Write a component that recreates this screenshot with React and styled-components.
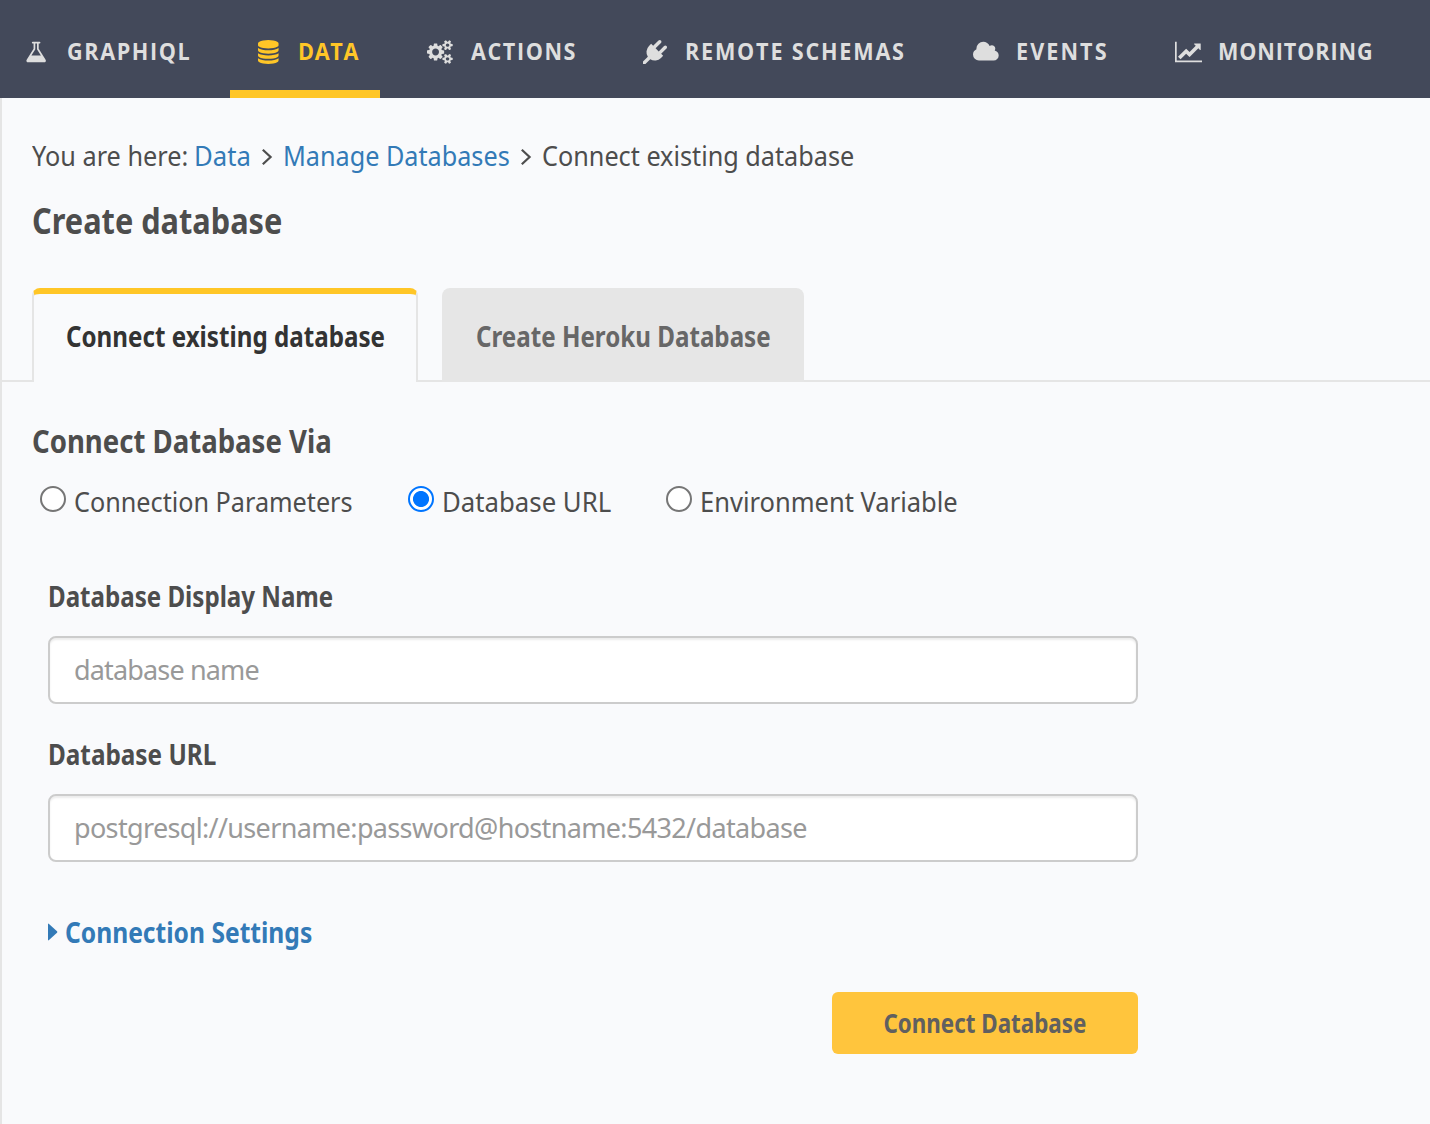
import React from 'react';
import styled, { createGlobalStyle, css } from 'styled-components';

const Global = createGlobalStyle`
  *, *::before, *::after { box-sizing: border-box; }
  body { margin: 0; background: #f9fafc; }
`;

const face = css`
  font-family: "Noto Sans", "Open Sans", sans-serif;
  font-weight: ${(p) => (p.$bold ? 700 : 400)};
  white-space: nowrap;
`;

/* Narrows the glyphs horizontally while keeping their height. */
const Narrow = styled.span`
  display: inline-block;
  transform: scaleX(${(p) => p.$by});
  transform-origin: ${(p) => p.$origin || 'left'} center;
`;

const Page = styled.div`
  min-height: 1124px;
  display: flex;
  flex-direction: column;
  overflow: hidden;
  color: #4d4d4d;
`;

const Nav = styled.nav`
  display: flex;
  height: 98px;
  background: #43495a;
`;

const NavItem = styled.a`
  display: flex;
  flex: none;
  align-items: center;
  width: ${(p) => p.$width}px;
  margin-right: ${(p) => p.$gap}px;
  padding: 12px 0 0 ${(p) => p.$pad}px;
  border-bottom: 8px solid ${(p) => (p.$active ? '#ffc627' : 'transparent')};
  color: ${(p) => (p.$active ? '#ffc627' : '#dedede')};
  text-decoration: none;
`;

const NavIcon = styled.span`
  display: flex;
  flex: none;
  width: ${(p) => p.$width}px;
  padding-top: 1px;
  svg { display: block; height: 24px; fill: currentColor; }
`;

const NavLabel = styled(Narrow)`
  font-family: "Open Sans", "Noto Sans", sans-serif;
  font-weight: 700;
  font-size: 24px;
  line-height: 32px;
  letter-spacing: ${(p) => p.$track}px;
  white-space: nowrap;
`;

const Main = styled.main`
  flex: 1;
  border-left: 2px solid #e5e5e5;
`;

const Breadcrumb = styled.div`
  display: flex;
  height: 40px;
  margin: 37px 0 0 30px;
`;

const Crumb = styled.span`
  ${face}
  flex: none;
  width: ${(p) => p.$width}px;
  font-size: 28px;
  line-height: 40px;
  color: ${(p) => (p.$link ? '#337ab7' : '#4d4d4d')};
`;

const Chevron = styled.svg`
  flex: none;
  width: 12px;
  height: 18px;
  margin: 13px ${(p) => p.$gap}px 0 0;
  fill: none;
  stroke: #4d4d4d;
  stroke-width: 2.2;
`;

const Title = styled.h1`
  ${face}
  margin: 21px 0 0 30px;
  font-size: 36px;
  line-height: 50px;
`;

const Tabs = styled.div`
  display: flex;
  gap: 24px;
  height: 94px;
  margin-top: 42px;
  padding-left: 30px;
  box-shadow: inset 0 -2px #e5e5e5;
`;

const Tab = styled.div`
  ${face}
  width: ${(p) => p.$width}px;
  padding-left: ${(p) => (p.$active ? 31.5 : 33.5)}px;
  font-size: 28px;
  border-radius: 8px 8px 0 0;
  ${(p) =>
    p.$active
      ? css`
          border: 2px solid #e5e5e5;
          border-top: 6px solid #ffc627;
          border-bottom: 0;
          background: #f9fafc;
          color: #333;
          line-height: 84px;
        `
      : css`
          background: #e6e6e6;
          color: #676767;
          line-height: 96px;
        `}
`;

const Section = styled.h2`
  ${face}
  margin: 39px 0 0 30px;
  font-size: 32px;
  line-height: 40px;
`;

const Radios = styled.div`
  display: flex;
  margin: 20px 0 0 38px;
  height: 40px;
`;

const RadioLabel = styled.label`
  ${face}
  display: flex;
  width: ${(p) => p.$width}px;
  font-size: 28px;
  line-height: 40px;
`;

const Radio = styled.input.attrs({ type: 'radio' })`
  appearance: none;
  flex: none;
  width: 26px;
  height: 26px;
  margin: 5px 8px 0 0;
  border: 2px solid #767676;
  border-radius: 50%;
  background: #fff;
  &:checked {
    border-color: #0075ff;
    background: radial-gradient(circle, #0075ff 7.6px, #fff 8.4px);
  }
`;

const Form = styled.form`
  display: flex;
  flex-direction: column;
  width: 1090px;
  margin: 55px 0 0 46px;
`;

const Label = styled.label`
  ${face}
  font-size: 28px;
  line-height: 40px;
`;

const Field = styled.input`
  ${face}
  height: 68px;
  margin: 20px 0 30px;
  padding: 0 24px 1px;
  border: 2px solid #ccc;
  border-radius: 8px;
  background: #fff;
  box-shadow: inset 0 2px 2px rgba(0, 0, 0, 0.075);
  font-size: 27px;
  letter-spacing: ${(p) => p.$track}px;
  &::placeholder { color: #999; opacity: 1; }
`;

const Settings = styled.a`
  ${face}
  display: flex;
  align-items: center;
  gap: 6.5px;
  margin-top: 20px;
  font-size: 28px;
  line-height: 40px;
  color: #337ab7;
  svg { width: 10px; height: 18px; fill: currentColor; }
`;

const Submit = styled.button`
  ${face}
  align-self: flex-end;
  width: 306px;
  height: 62px;
  margin-top: 40px;
  padding: 0;
  border: 0;
  border-radius: 6px;
  background: #ffc53d;
  color: #606060;
  font-size: 26px;
`;

const ICONS = {
  flask: ['0 0 1792 1792', 'M1527 1448q56 89 21.5 152.5t-140.5 63.5h-1152q-106 0-140.5-63.5t21.5-152.5l503-793v-399h-64q-26 0-45-19t-19-45 19-45 45-19h512q26 0 45 19t19 45-19 45-45 19h-64v399zm-779-725l-272 429h712l-272-429-20-31v-436h-128v436z'],
  database: ['128 0 1536 1792', 'M896 768q237 0 443-43t325-127v170q0 69-103 128t-280 93.5-385 34.5-385-34.5-280-93.5-103-128v-170q119 84 325 127t443 43zm0 768q237 0 443-43t325-127v170q0 69-103 128t-280 93.5-385 34.5-385-34.5-280-93.5-103-128v-170q119 84 325 127t443 43zm0-384q237 0 443-43t325-127v170q0 69-103 128t-280 93.5-385 34.5-385-34.5-280-93.5-103-128v-170q119 84 325 127t443 43zm0-1152q208 0 385 34.5t280 93.5 103 128v128q0 69-103 128t-280 93.5-385 34.5-385-34.5-280-93.5-103-128v-128q0-69 103-128t280-93.5 385-34.5z'],
  cogs: ['-64 0 1920 1792', 'M832 896q0-106-75-181t-181-75-181 75-75 181 75 181 181 75 181-75 75-181zm768 512q0-52-38-90t-90-38-90 38-38 90q0 53 37.5 90.5t90.5 37.5 90.5-37.5 37.5-90.5zm0-1024q0-52-38-90t-90-38-90 38-38 90q0 53 37.5 90.5t90.5 37.5 90.5-37.5 37.5-90.5zm-384 421v185q0 10-7 19.5t-16 10.5l-155 24q-11 35-32 76 34 48 90 115 7 11 7 20 0 12-7 19-23 30-82.5 89.5t-78.5 59.5q-11 0-21-7l-115-90q-37 19-77 31-11 108-23 155-7 24-30 24h-186q-11 0-20-7.5t-10-17.5l-23-153q-34-10-75-31l-118 89q-7 7-20 7-11 0-21-8-144-133-144-160 0-9 7-19 10-14 41-53t47-61q-23-44-35-82l-152-24q-10-1-17-9.5t-7-19.5v-185q0-10 7-19.5t16-10.5l155-24q11-35 32-76-34-48-90-115-7-11-7-20 0-12 7-20 22-30 82-89t79-59q11 0 21 7l115 90q34-18 77-32 11-108 23-154 7-24 30-24h186q11 0 20 7.5t10 17.5l23 153q34 10 75 31l118-89q8-7 20-7 11 0 21 8 144 133 144 160 0 8-7 19-12 16-42 54t-45 60q23 48 34 82l152 23q10 2 17 10.5t7 19.5zm640 533v140q0 16-149 31-12 27-30 52 51 113 51 138 0 4-4 7-122 71-124 71-8 0-46-47t-52-68q-20 2-30 2t-30-2q-14 21-52 68t-46 47q-2 0-124-71-4-3-4-7 0-25 51-138-18-25-30-52-149-15-149-31v-140q0-16 149-31 13-29 30-52-51-113-51-138 0-4 4-7 4-2 35-20t59-34 30-16q8 0 46 46.5t52 67.5q20-2 30-2t30 2q51-71 92-112l6-2q4 0 124 70 4 3 4 7 0 25-51 138 17 23 30 52 149 15 149 31zm0-1024v140q0 16-149 31-12 27-30 52 51 113 51 138 0 4-4 7-122 71-124 71-8 0-46-47t-52-68q-20 2-30 2t-30-2q-14 21-52 68t-46 47q-2 0-124-71-4-3-4-7 0-25 51-138-18-25-30-52-149-15-149-31v-140q0-16 149-31 13-29 30-52-51-113-51-138 0-4 4-7 4-2 35-20t59-34 30-16q8 0 46 46.5t52 67.5q20-2 30-2t30 2q51-71 92-112l6-2q4 0 124 70 4 3 4 7 0 25-51 138 17 23 30 52 149 15 149 31z'],
  plug: ['0 0 1792 1792', 'M1755 453q37 38 37 90.5t-37 90.5l-401 400 150 150-160 160q-163 163-389.5 186.5t-411.5-100.5l-362 362h-181v-181l362-362q-124-185-100.5-411.5t186.5-389.5l160-160 150 150 400-401q38-37 91-37t90 37 37 90.5-37 90.5l-400 401 234 234 401-400q38-37 91-37t90 37z'],
  cloud: ['64 0 1920 1792', 'M1984 1152q0 159-112.5 271.5t-271.5 112.5h-1088q-185 0-316.5-131.5t-131.5-316.5q0-132 71-241.5t187-163.5q-2-28-2-43 0-212 150-362t362-150q158 0 286.5 88t187.5 230q70-62 166-62 106 0 181 75t75 181q0 75-41 138 129 30 213 134.5t84 239.5z'],
  chart: ['0 0 2048 1792', 'M2048 1536v128h-2048v-1536h128v1408h1920zm-128-1248v435q0 21-19.5 29.5t-35.5-7.5l-121-121-633 633q-10 10-23 10t-23-10l-233-233-416 416-192-192 585-585q10-10 23-10t23 10l233 233 464-464-121-121q-16-16-7.5-35.5t29.5-19.5h435q14 0 23 9t9 23z'],
};

const NAV = [
  { icon: 'flask', label: 'GRAPHIQL', width: 210, gap: 20, pad: 25, box: 41.5, track: 1.8 },
  { icon: 'database', label: 'DATA', width: 150, gap: 21, pad: 28, box: 40, track: 0.8, active: true },
  { icon: 'cogs', label: 'ACTIONS', width: 196, gap: 20, pad: 26, box: 43.7, track: 1.75 },
  { icon: 'plug', label: 'REMOTE SCHEMAS', width: 310, gap: 20, pad: 26, box: 42.3, track: 2 },
  { icon: 'cloud', label: 'EVENTS', width: 182, gap: 20, pad: 26, box: 43.3, track: 2.3 },
  { icon: 'chart', label: 'MONITORING', width: 246, gap: 0, pad: 26, box: 43, track: 1 },
];

const OPTIONS = [
  { label: 'Connection Parameters', width: 368, by: 0.9 },
  { label: 'Database URL', width: 258, by: 0.92, checked: true },
  { label: 'Environment Variable', width: 300, by: 0.911 },
];

const RightAngle = ({ gap }) => (
  <Chevron $gap={gap} viewBox="0 0 12 18"><path d="M1.8 1.7 L9.6 9 L1.8 16.3" /></Chevron>
);

export default function App() {
  return (
    <Page>
      <Global />
      <Nav>
        {NAV.map((n) => (
          <NavItem key={n.label} $width={n.width} $gap={n.gap} $pad={n.pad} $active={n.active}>
            <NavIcon $width={n.box}>
              <svg viewBox={ICONS[n.icon][0]}><path d={ICONS[n.icon][1]} /></svg>
            </NavIcon>
            <NavLabel $by={0.9} $track={n.track}>{n.label}</NavLabel>
          </NavItem>
        ))}
      </Nav>
      <Main>
        <Breadcrumb>
          <Crumb $width={162}><Narrow $by={0.902}>You are here:</Narrow></Crumb>
          <Crumb $link $width={67}><Narrow $by={0.918}>Data</Narrow></Crumb>
          <RightAngle gap={9.5} />
          <Crumb $link $width={237}><Narrow $by={0.9}>Manage Databases</Narrow></Crumb>
          <RightAngle gap={10.5} />
          <Crumb $width={360}><Narrow $by={0.901}>Connect existing database</Narrow></Crumb>
        </Breadcrumb>
        <Title $bold><Narrow $by={0.853}>Create database</Narrow></Title>
        <Tabs>
          <Tab $bold $active $width={386}><Narrow $by={0.863}>Connect existing database</Narrow></Tab>
          <Tab $bold $width={362}><Narrow $by={0.863}>Create Heroku Database</Narrow></Tab>
        </Tabs>
        <Section $bold><Narrow $by={0.861}>Connect Database Via</Narrow></Section>
        <Radios>
          {OPTIONS.map((o) => (
            <RadioLabel key={o.label} $width={o.width}>
              <Radio name="via" defaultChecked={o.checked} />
              <Narrow $by={o.by}>{o.label}</Narrow>
            </RadioLabel>
          ))}
        </Radios>
        <Form>
          <Label $bold><Narrow $by={0.861}>Database Display Name</Narrow></Label>
          <Field $track={-0.85} placeholder="database name" />
          <Label $bold><Narrow $by={0.868}>Database URL</Narrow></Label>
          <Field $track={-0.66} placeholder="postgresql://username:password@hostname:5432/database" />
          <Settings $bold>
            <svg viewBox="0 0 10 18"><path d="M0 1.2Q0 0 1 1L9 8.2Q9.8 9 9 9.8L1 17Q0 18 0 16.8Z" /></svg>
            <Narrow $by={0.879}>Connection Settings</Narrow>
          </Settings>
          <Submit $bold type="button"><Narrow $by={0.861} $origin="center">Connect Database</Narrow></Submit>
        </Form>
      </Main>
    </Page>
  );
}
